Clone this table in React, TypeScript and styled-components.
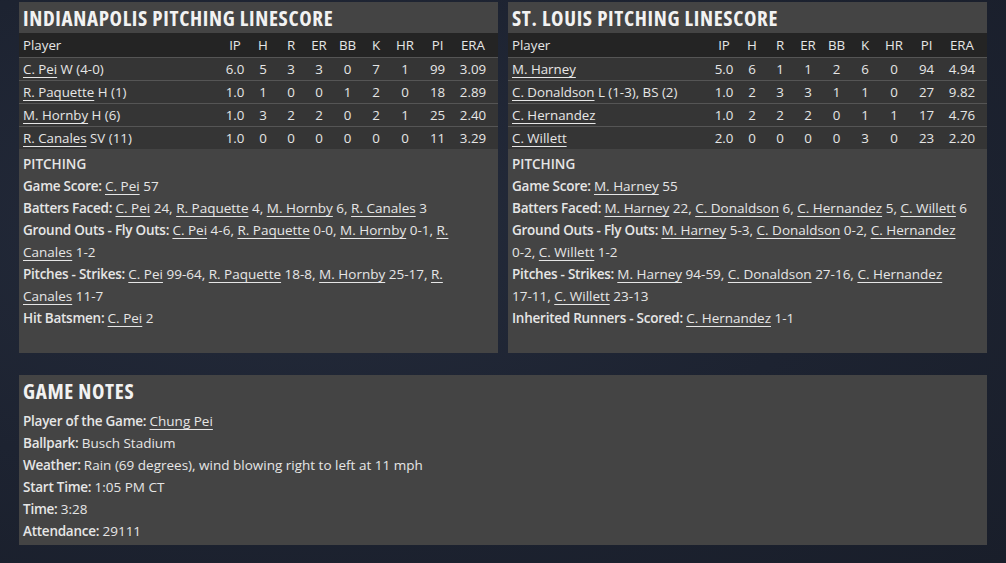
import React from 'react';
import styled, { createGlobalStyle } from 'styled-components';

const GlobalStyle = createGlobalStyle`
    html, body {
        margin: 0;
        padding: 0;
    }
    body {
        background: radial-gradient(ellipse at 30% 40%, #242b3b 0%, #1d2331 55%, #191e2a 100%);
        color: #e4e4e4;
        font-family: "Open Sans", "Noto Sans", sans-serif;
        min-height: 563px;
    }
`

const Page = styled.div`
    display: grid;
    grid-template-columns: 479px 479px;
    grid-template-rows: 351px 170px;
    column-gap: 10px;
    row-gap: 22px;
    padding: 2px 19px 18px 19px;
`

const Panel = styled.section<{ $wide?: boolean }>`
    background-color: #444444;
    grid-column: ${p => (p.$wide ? '1 / 3' : 'auto')};
    display: flex;
    flex-direction: column;
    overflow: hidden;
`

const Title = styled.h2`
    margin: 0;
    padding: 2px 4px 0;
    line-height: 29px;
    font-size: 21px;
    font-weight: 700;
    font-stretch: 85%;
    letter-spacing: 0.65px;
    color: #f2f2f2;
`

const Table = styled.div`
    display: flex;
    flex-direction: column;
`

const cols = '1fr 28px 28px 28px 28px 29px 28px 30px 35px 36px';

const HeaderRow = styled.div`
    display: grid;
    grid-template-columns: ${cols};
    padding: 0 7px 0 4px;
    height: 24px;
    line-height: 24px;
    background-color: #242424;
    font-size: 13.3px;
    color: #e6e6e6;
`

const Row = styled.div`
    display: grid;
    grid-template-columns: ${cols};
    padding: 0 7px 0 4px;
    height: 22px;
    line-height: 22px;
    background-color: #353535;
    border-top: 1px solid #555555;
    font-size: 13.3px;
    color: #e6e6e6;
`

const Cell = styled.span`
    text-align: center;
    white-space: nowrap;
`

const PlayerCell = styled.span`
    white-space: nowrap;
`

const Link = styled.span`
    text-decoration: underline;
    text-underline-offset: 3px;
    text-decoration-thickness: 1px;
    cursor: pointer;
`

const Value = styled.span`
    white-space: nowrap;
`

const Notes = styled.div<{ $top?: number }>`
    padding: ${p => p.$top ?? 4}px 5px 0 4px;
    font-size: 13.5px;
    line-height: 22px;
    color: #e6e6e6;
`

const Heading = styled.div`
    font-weight: 600;
`

const Line = styled.div``

const Label = styled.b`
    font-weight: 600;
    letter-spacing: -0.25px;
`

type Pitcher = {
    name: string;
    note?: string;
    stats: string[];
};

const headers = ['IP', 'H', 'R', 'ER', 'BB', 'K', 'HR', 'PI', 'ERA'];

const indy: Pitcher[] = [
    { name: 'C. Pei', note: 'W (4-0)', stats: ['6.0', '5', '3', '3', '0', '7', '1', '99', '3.09'] },
    { name: 'R. Paquette', note: 'H (1)', stats: ['1.0', '1', '0', '0', '1', '2', '0', '18', '2.89'] },
    { name: 'M. Hornby', note: 'H (6)', stats: ['1.0', '3', '2', '2', '0', '2', '1', '25', '2.40'] },
    { name: 'R. Canales', note: 'SV (11)', stats: ['1.0', '0', '0', '0', '0', '0', '0', '11', '3.29'] },
];

const stl: Pitcher[] = [
    { name: 'M. Harney', stats: ['5.0', '6', '1', '1', '2', '6', '0', '94', '4.94'] },
    { name: 'C. Donaldson', note: 'L (1-3), BS (2)', stats: ['1.0', '2', '3', '3', '1', '1', '0', '27', '9.82'] },
    { name: 'C. Hernandez', stats: ['1.0', '2', '2', '2', '0', '1', '1', '17', '4.76'] },
    { name: 'C. Willett', stats: ['2.0', '0', '0', '0', '0', '3', '0', '23', '2.20'] },
];

// each entry: [player, value]
type Entry = [string, string];

const Entries: React.FC<{ items: Entry[] }> = ({ items }) => (
    <>
        {items.map(([name, value], i) => (
            <React.Fragment key={name + i}>
                <Link>{name}</Link> <Value>{value}{i < items.length - 1 ? ',' : ''}</Value>
                {i < items.length - 1 ? ' ' : ''}
            </React.Fragment>
        ))}
    </>
);

const Linescore: React.FC<{ title: string; pitchers: Pitcher[]; children: React.ReactNode }> = ({ title, pitchers, children }) => (
    <Panel>
        <Title>{title}</Title>
        <Table>
            <HeaderRow>
                <PlayerCell>Player</PlayerCell>
                {headers.map(h => <Cell key={h}>{h}</Cell>)}
            </HeaderRow>
            {pitchers.map(p => (
                <Row key={p.name}>
                    <PlayerCell>
                        <Link>{p.name}</Link>{p.note ? ` ${p.note}` : ''}
                    </PlayerCell>
                    {p.stats.map((s, i) => <Cell key={i}>{s}</Cell>)}
                </Row>
            ))}
        </Table>
        <Notes>
            <Heading>PITCHING</Heading>
            {children}
        </Notes>
    </Panel>
);

export default function App() {
    return (
        <>
            <GlobalStyle />
            <Page>
                <Linescore title="INDIANAPOLIS PITCHING LINESCORE" pitchers={indy}>
                    <Line><Label>Game Score: </Label><Entries items={[['C. Pei', '57']]} /></Line>
                    <Line><Label>Batters Faced: </Label><Entries items={[['C. Pei', '24'], ['R. Paquette', '4'], ['M. Hornby', '6'], ['R. Canales', '3']]} /></Line>
                    <Line><Label>Ground Outs - Fly Outs: </Label><Entries items={[['C. Pei', '4-6'], ['R. Paquette', '0-0'], ['M. Hornby', '0-1'], ['R. Canales', '1-2']]} /></Line>
                    <Line><Label>Pitches - Strikes: </Label><Entries items={[['C. Pei', '99-64'], ['R. Paquette', '18-8'], ['M. Hornby', '25-17'], ['R. Canales', '11-7']]} /></Line>
                    <Line><Label>Hit Batsmen: </Label><Entries items={[['C. Pei', '2']]} /></Line>
                </Linescore>
                <Linescore title="ST. LOUIS PITCHING LINESCORE" pitchers={stl}>
                    <Line><Label>Game Score: </Label><Entries items={[['M. Harney', '55']]} /></Line>
                    <Line><Label>Batters Faced: </Label><Entries items={[['M. Harney', '22'], ['C. Donaldson', '6'], ['C. Hernandez', '5'], ['C. Willett', '6']]} /></Line>
                    <Line><Label>Ground Outs - Fly Outs: </Label><Entries items={[['M. Harney', '5-3'], ['C. Donaldson', '0-2'], ['C. Hernandez', '0-2'], ['C. Willett', '1-2']]} /></Line>
                    <Line><Label>Pitches - Strikes: </Label><Entries items={[['M. Harney', '94-59'], ['C. Donaldson', '27-16'], ['C. Hernandez', '17-11'], ['C. Willett', '23-13']]} /></Line>
                    <Line><Label>Inherited Runners - Scored: </Label><Entries items={[['C. Hernandez', '1-1']]} /></Line>
                </Linescore>
                <Panel $wide>
                    <Title>GAME NOTES</Title>
                    <Notes $top={4}>
                        <Line><Label>Player of the Game: </Label><Link>Chung Pei</Link></Line>
                        <Line><Label>Ballpark: </Label>Busch Stadium</Line>
                        <Line><Label>Weather: </Label>Rain (69 degrees), wind blowing right to left at 11 mph</Line>
                        <Line><Label>Start Time: </Label>1:05 PM CT</Line>
                        <Line><Label>Time: </Label>3:28</Line>
                        <Line><Label>Attendance: </Label>29111</Line>
                    </Notes>
                </Panel>
            </Page>
        </>
    );
}
